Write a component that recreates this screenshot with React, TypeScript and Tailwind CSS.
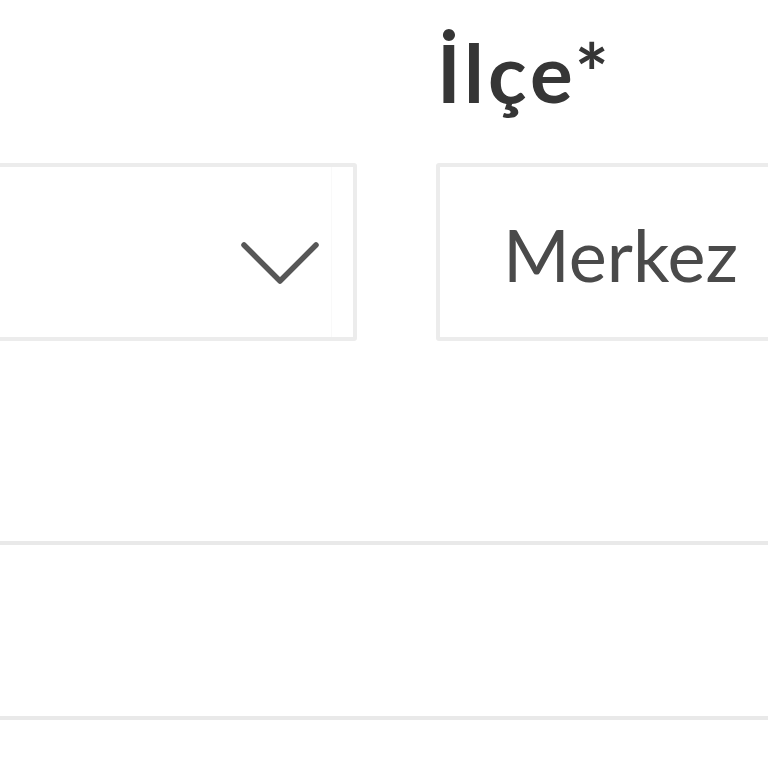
import React from 'react';

const Chevron: React.FC = () => (
  <svg width="78" height="46" viewBox="0 0 78 46" fill="none" className="text-[#575757]">
    <path d="M3 4 L39 40 L75 4" stroke="currentColor" strokeWidth="5.5" strokeLinecap="round" strokeLinejoin="round" />
  </svg>
);

const App: React.FC = () => {
  return (
    <div className="w-[768px] h-[768px] overflow-hidden bg-white font-['Lato','Open_Sans',sans-serif]">
      <div className="flex gap-[79px] -ml-[40px] pt-[20px]">
        {/* Il field (cut off) */}
        <div className="w-[397px] shrink-0 flex flex-col">
          <div className="h-[143px]" />
          <div className="h-[178px] border-[4px] border-[#ececec] rounded-[3px] flex items-stretch justify-end">
            <div className="flex items-center pr-[12px] pt-[24px]">
              <Chevron />
            </div>
            <div className="w-[22px] border-l border-[#f9f9f9]" />
          </div>
        </div>

        {/* Ilce field */}
        <div className="w-[420px] shrink-0 flex flex-col">
          <label className="h-[143px] flex items-end pb-[51px] pl-[1px] text-[80px] leading-none font-bold text-[#363636] tracking-[4px]">
            İlçe*
          </label>
          <div className="h-[178px] border-[4px] border-[#ececec] rounded-[3px] flex items-center pl-[63px]">
            <span className="text-[72px] leading-none text-[#4a4a4a] pt-[4px]">Merkez</span>
          </div>
        </div>
      </div>

      <div className="mt-[200px] -mx-[10px] h-[179px] border-y-[4px] border-[#e9e9e9]" />
    </div>
  );
};

export default App;
